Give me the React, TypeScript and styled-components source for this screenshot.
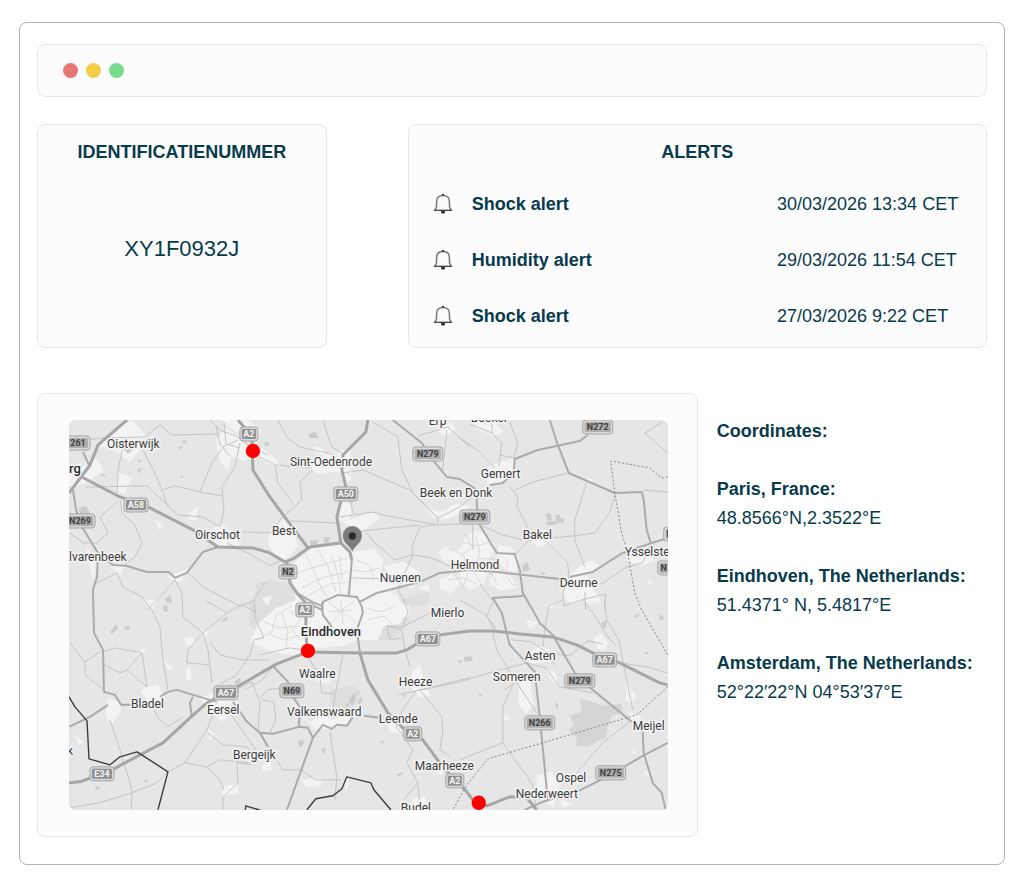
import React from "react";
import styled, { createGlobalStyle } from "styled-components";

const GlobalStyle = createGlobalStyle`
  *, *::before, *::after { box-sizing: border-box; }
  body {
    margin: 0;
    background: #ffffff;
    color: #073b4c;
    font-family: "Liberation Sans", Arial, Helvetica, sans-serif;
    font-size: 18px;
    line-height: 29px;
  }
`;

const Frame = styled.main`
  margin: 22px 19px 17px;
  padding: 21px 17px 27px;
  border: 1px solid #b4b4b4;
  border-radius: 8px;
`;

const Panel = styled.section`
  background: #fcfcfc;
  border: 1px solid #e6e6e6;
  border-radius: 8px;
`;

const TitleBar = styled.header`
  display: flex;
  align-items: center;
  gap: 8px;
  height: 53px;
  padding: 0 25px;
  background: #fcfcfc;
  border: 1px solid #e6e6e6;
  border-radius: 8px;
`;

const WindowDot = styled.span<{ $color: string }>`
  width: 15px;
  height: 15px;
  border-radius: 50%;
  background: ${(p) => p.$color};
`;

const SummaryRow = styled.div`
  display: grid;
  grid-template-columns: minmax(0, 1fr) minmax(0, 2fr);
  gap: 81px;
  margin-top: 27px;
`;

const IdPanel = styled(Panel)`
  display: flex;
  flex-direction: column;
  padding: 13px 16px;
  text-align: center;
`;

const PanelTitle = styled.h2`
  margin: 0;
  font-size: 18px;
  line-height: 29px;
  font-weight: 700;
  text-align: center;
`;

const IdNumber = styled.p`
  margin: 67px 0 0;
  font-size: 22px;
  line-height: 29px;
`;

const AlertsPanel = styled(Panel)`
  padding: 13px 24px 3px;
`;

const AlertList = styled.ul`
  list-style: none;
  margin: 9px 0 0;
  padding: 0;
`;

const AlertRow = styled.li`
  display: grid;
  grid-template-columns: 20px minmax(0, 1fr) 185px;
  column-gap: 19px;
  align-items: center;
  height: 56px;
`;

const AlertName = styled.strong`
  font-weight: 700;
`;

const AlertTime = styled.time`
  white-space: nowrap;
`;

const LocationRow = styled.div`
  display: grid;
  grid-template-columns: minmax(0, 660fr) minmax(0, 270fr);
  gap: 19px;
  margin-top: 45px;
`;

const MapPanel = styled(Panel)`
  padding: 26px 29px 26px 31px;
`;

const MapCanvas = styled.svg`
  display: block;
  width: 100%;
  height: auto;
  border-radius: 6px;
  overflow: hidden;
  background: #e6e6e6;
  font-family: Roboto, sans-serif;
`;

const Coordinates = styled.aside`
  padding-top: 24px;
  white-space: nowrap;
`;

const CoordinatesTitle = styled.h2`
  margin: 0;
  font-size: 18px;
  line-height: 29px;
`;

const Place = styled.dl`
  margin: 29px 0 0;

  dt { font-weight: 700; }
  dd { margin: 0; }
`;

const PlaceLabel = styled.text<{ $city?: boolean }>`
  font-size: ${(p) => (p.$city ? "13px" : "12px")};
  font-weight: ${(p) => (p.$city ? 500 : 400)};
  fill: ${(p) => (p.$city ? "#2a2a2a" : "#3c3c3c")};
  stroke: #f4f4f4;
  stroke-width: 3px;
  stroke-linejoin: round;
  paint-order: stroke;
`;

const ShieldLabel = styled.text<{ $motorway: boolean }>`
  font-size: 9px;
  font-weight: 700;
  text-anchor: middle;
  fill: ${(p) => (p.$motorway ? "#f4f4f4" : "#3f3f3f")};
`;

const Bell = () => (
  <svg width="20" height="22" viewBox="0 0 20 22" fill="none" aria-hidden="true">
    <path
      d="M1.500 16.900C2.900 16.200 3.600 14.600 3.600 12V8.400C3.600 4.500 6 2.500 10 2.500s6.400 2 6.400 5.900V12c0 2.600.7 4.200 2.100 4.900"
      stroke="#777777"
      strokeWidth="1.500"
      strokeLinejoin="round"
    />
    <path d="M1 17.300h18" stroke="#4c4c4c" strokeWidth="1.400" />
    <circle cx="10" cy="1.900" r="1.200" fill="#3e3e3e" />
    <path d="M7.900 18h4.200c0 1.700-.8 2.700-2.100 2.700s-2.100-1-2.100-2.700Z" fill="#333333" />
  </svg>
);

const towns = [
  "290,566 312,548 332,546 341,545 356,552 374,548 384,560 378,580 388,590 398,596 406,612 400,624 384,626 378,640 360,640 344,646 318,648 300,656 272,652 250,642 258,624 276,608 296,600",
  "438,552 446,546 452,552 462,548 466,536 476,530 486,534 496,546 492,558 478,564 462,562 446,564",
  "498,544 512,548 520,558 516,572 506,570 498,560",
  "458,566 474,564 488,572 484,584 470,590 462,582",
  "492,574 506,572 514,580 516,588 500,590 490,584",
  "440,580 452,574 460,584 450,594 440,588",
  "418,588 428,584 430,592",
  "100,446 114,428 132,420 146,436 140,450 130,462 116,452",
  "69,466 78,470 96,458 104,470 84,484 69,486",
  "216,440 226,428 238,436 250,450 246,462 232,456 228,470 220,462",
  "222,420 248,420 262,430 256,440 236,432",
  "262,448 275,458 282,468 268,464 258,456",
  "306,466 330,452 346,456 352,474 334,472 318,474",
  "314,446 322,448 326,456 314,452",
  "338,452 350,448 352,462 342,470 352,478 344,486",
  "270,530 284,518 290,522 298,546 286,560 274,554 268,544",
  "340,500 352,505 350,520 372,512 380,518 362,532 350,526 340,520",
  "203,534 222,524 236,534 240,546 222,548",
  "117,472 132,478 124,494 116,490",
  "190,512 198,506 196,520 188,520",
  "156,520 164,526 158,530",
  "86,548 96,556 94,582 88,560",
  "112,566 126,564 120,576",
  "168,576 186,570 182,582 172,580",
  "384,566 404,562 420,572 414,588 394,584",
  "372,580 386,574 398,580 396,590 380,592",
  "486,468 502,462 514,458 512,474 500,484 488,484",
  "470,420 492,420 504,432 494,436 478,430",
  "436,428 452,422 456,430 444,436",
  "426,508 440,512 456,504 470,506 460,514 444,520 434,518",
  "530,540 544,530 550,542 538,548",
  "562,582 580,566 592,560 600,566 588,576 594,590 602,602 590,604 578,600 572,606 564,596",
  "588,478 594,480 588,484",
  "626,560 650,548 654,562 640,566",
  "526,656 540,646 550,650 548,662 530,664",
  "546,670 556,672 558,684 550,680",
  "520,682 530,680 534,706 526,714 518,704",
  "526,620 538,622 530,630",
  "536,776 552,772 560,786 554,808 540,798",
  "560,800 574,804 564,808",
  "628,712 640,716 646,728 636,730",
  "594,638 602,634 608,642 604,652 598,648",
  "627,684 637,696 632,704 626,700",
  "412,672 420,664 424,680 430,696 420,698 412,688",
  "382,596 398,602 410,606 408,618 398,616",
  "386,720 402,724 402,734 390,732",
  "320,668 334,672 330,684 316,682",
  "296,712 310,722 320,716 334,720 352,712 348,726 334,728 316,730 308,722",
  "108,698 118,702 122,710 112,724 105,716",
  "140,690 158,684 164,698 156,706 148,704",
  "200,698 220,690 236,698 240,708 222,722 206,708",
  "186,672 190,664 192,678 186,682",
  "163,660 174,668 168,670",
  "136,654 146,646 144,654",
  "184,638 192,636 196,644 186,646",
  "200,630 210,632 204,638",
  "224,786 238,784 238,794 222,796",
  "208,730 216,734 210,740",
  "243,750 254,756 248,764",
  "262,766 270,762 272,770 262,772",
  "430,770 446,762 442,776",
  "412,800 426,796 426,810 414,810",
  "345,782 352,770 346,794",
  "506,714 510,720 504,720",
  "302,780 320,778 322,786 306,788",
  "646,770 650,776 644,774",
  "634,748 638,754 632,754",
  "648,578 653,582 649,586",
  "546,606 556,602 552,608",
  "262,598 272,596 268,606",
  "142,600 158,600 152,610",
  "76,736 84,742 78,746",
];

const woods = [
  "122,447 130,440 136,446 128,454",
  "182,440 188,441 184,444",
  "178,447 182,446 181,450",
  "137,470 142,468 139,474",
  "138,459 142,461 138,463",
  "102,474 107,475 101,477",
  "181,475 184,477 181,478",
  "78,508 86,506 92,516 80,514",
  "264,442 270,443 266,447",
  "308,434 316,432 318,438 310,438",
  "546,514 551,513 552,520 548,521",
  "556,515 560,515 561,519 565,518 563,524 560,522 556,524",
  "547,522 556,521 555,525 548,525",
  "523,565 528,562 530,570 523,572",
  "541,572 547,573 542,575",
  "262,584 266,581 264,586",
  "165,598 171,596 172,603 166,602",
  "163,606 167,605 168,611 164,612",
  "222,620 228,616 227,620 223,622",
  "110,632 116,624 118,628 112,634",
  "124,628 129,625 130,629 125,630",
  "234,682 240,678 241,682 236,685",
  "464,657 472,656 473,661 465,662",
  "458,661 463,660 460,664",
  "602,622 607,620 606,628 602,628",
  "634,616 640,613 638,618",
  "660,614 665,618 660,621",
  "644,652 650,652 647,655",
  "298,742 303,740 304,744 300,748",
  "321,750 326,748 324,755",
  "396,774 403,773 400,777",
  "95,786 101,788 96,790",
  "144,781 148,780 146,784",
  "350,700 354,692 356,700 352,706",
  "358,702 361,697 362,702 359,705",
  "402,696 406,694 405,698",
  "478,693 483,695 480,697",
  "556,702 559,706 556,710",
  "380,742 384,741 383,744",
  "262,668 266,670 263,672",
  "310,541 318,540 317,545 311,546",
  "324,538 330,537 329,542 324,543",
];

const streets = [
  "304,552 312,566 322,590 328,598",
  "318,550 328,566 336,592",
  "332,556 338,574 341,594",
  "296,574 312,568 340,560 348,558",
  "302,588 322,578 348,572",
  "308,596 330,584 350,582",
  "357,560 370,566 374,580",
  "352,570 366,572 380,568",
  "340,556 342,580",
  "330,612 352,610",
  "341,600 343,624",
  "328,602 340,611 354,602",
  "330,624 342,611 356,622",
  "264,622 280,628 300,626",
  "268,634 284,640 304,634",
  "282,612 288,632 286,648",
  "256,640 272,632 276,616 292,606",
  "290,610 300,620 292,630 300,640",
  "366,608 380,612 396,606",
  "368,620 384,616 392,624",
  "446,560 462,566 484,558 500,560",
  "452,548 464,556 468,574 462,590",
  "476,536 480,552 474,572 486,592",
  "492,552 490,570 498,586",
  "448,580 462,578 478,584",
  "508,560 506,576 514,586",
  "460,542 478,546 490,542",
  "466,534 472,548 460,556",
];

const lanes = [
  "69,447 84,440 104,438 145,437 160,425 172,435 217,434",
  "143,450 157,477 168,507",
  "123,447 118,470 117,493",
  "85,487 147,486 160,498 178,515 203,517 220,527",
  "163,490 175,486 200,492 222,496",
  "200,492 212,463 223,447 238,440",
  "240,443 235,467 222,487 224,510 220,527",
  "210,420 220,430 236,436 250,446 268,455",
  "224,422 226,444 240,448",
  "216,426 220,444 230,456",
  "120,500 122,513 135,525 142,543 135,557 123,566",
  "117,502 100,517 108,533 97,543 83,543 70,533",
  "242,532 270,533 284,526",
  "227,543 250,554 270,566 282,560",
  "188,573 203,587 222,597 240,606 252,602 262,588",
  "175,580 160,597 147,610",
  "175,580 182,593 183,617 203,633 208,650 212,683",
  "97,583 117,573 123,587 142,597 152,610 160,627 163,660 168,690",
  "203,633 227,613 242,605 257,613",
  "227,613 206,601",
  "203,633 188,650 187,663 210,665",
  "210,642 220,655 242,660 270,660",
  "254,600 256,620 264,638 254,640 250,655 236,676 220,684",
  "103,652 115,648 142,653 127,670 120,673 104,665",
  "127,670 147,687 142,653",
  "70,643 85,662 85,675 104,690",
  "85,662 100,652",
  "110,720 120,750 132,790 131,810",
  "69,808 100,803 132,793 157,783 168,772 185,763 207,730 214,712",
  "185,763 207,767 220,760 250,763",
  "207,767 220,780 224,790",
  "208,733 223,745 247,747 255,758",
  "153,707 158,718 168,727 183,717",
  "228,710 246,736 256,750",
  "236,690 252,682 260,703 258,732",
  "245,690 262,680 272,668",
  "252,765 237,763 238,783 223,797 223,810",
  "323,420 332,447 342,453",
  "278,420 287,437 300,447 336,455",
  "260,457 275,465 312,468",
  "313,470 300,482 302,500 283,517 270,533",
  "275,465 278,483 293,503",
  "343,473 363,470 410,490 438,518",
  "373,422 398,437 402,470 413,493 438,518 460,507 476,494",
  "438,518 438,525 410,520 383,515 374,512 340,517",
  "350,497 353,513",
  "290,521 337,523",
  "353,532 420,525",
  "435,525 420,527 412,547 413,555 398,590 404,600",
  "367,533 375,543 395,560 413,555",
  "438,525 462,524",
  "448,427 418,436",
  "448,427 470,447",
  "447,430 443,470",
  "353,578 383,579",
  "413,555 432,558 450,566",
  "460,438 480,452 495,468",
  "470,424 492,433 502,443 499,466",
  "492,420 492,433",
  "510,422 518,443 514,458 500,455",
  "510,487 518,497 517,507 527,525 526,537",
  "515,490 533,482 569,473",
  "587,482 575,520 575,540 585,567",
  "615,495 610,513 595,533 573,536 553,538",
  "515,554 530,540 545,540 568,563 569,577",
  "480,525 503,535 523,540",
  "473,524 473,550",
  "645,433 663,422",
  "645,433 668,453",
  "643,490 668,492",
  "569,577 563,593 564,606 582,600 606,594 605,610",
  "585,592 586,610",
  "600,585 627,567 643,563 651,545",
  "480,584 494,602",
  "493,602 487,616 495,630",
  "493,633 497,650 513,677 537,713",
  "460,600 486,615 496,628",
  "397,695 460,682 493,672 527,663 546,668 560,687 593,693",
  "505,690 520,680 532,674",
  "513,685 503,707 503,743 515,760 528,777 535,790 536,808",
  "460,760 477,753 503,743",
  "605,600 607,620 619,640 627,680 633,710",
  "583,600 594,614 606,634 616,646",
  "563,600 549,606 545,630 543,647",
  "512,640 532,642 546,652 556,666",
  "546,652 570,656 588,641 603,644",
  "630,722 603,743 577,773",
  "620,663 647,667 668,673",
  "387,626 402,630 405,650 410,667",
  "404,600 408,612 403,627 387,626",
  "387,626 390,640 402,638",
  "432,612 403,627",
  "420,690 442,717 443,733 440,750 450,756",
  "420,690 470,678",
  "417,690 403,710 396,726 413,750 407,763 418,783 420,806",
  "418,783 404,800",
  "343,655 332,713",
  "307,655 320,677 322,693 334,694",
  "260,655 290,648 304,650",
  "262,700 274,702 276,720 270,733",
  "330,732 337,777 335,800",
  "260,733 283,770 302,770 315,780 342,780",
  "282,688 268,690 260,698",
  "352,700 344,710 360,690",
];

const regionalRoads = [
  "83,452 90,467",
  "73,490 76,510 82,527 98,553 97,577 93,590 94,633 103,650 104,692 115,695 121,705 132,705",
  "98,553 113,565 127,566 147,572 169,572 175,578 187,573 203,552 218,547",
  "69,727 90,717 108,705",
  "160,697 168,692 177,690 193,695 217,702",
  "193,697 190,703 192,717",
  "233,702 247,722 260,733 273,734 299,727 308,728 313,738 287,810",
  "260,733 268,747",
  "272,665 288,682 293,697 300,707 299,727",
  "313,738 323,725 332,729 337,725 347,726 353,717",
  "364,716 380,718",
  "306,603 314,606 322,610 323,602 338,595 357,597 362,607 363,613 357,630 360,652",
  "322,603 323,615 332,627",
  "297,593 312,602 322,606",
  "360,602 377,593 420,582 440,573 470,570 497,572 560,579",
  "393,420 422,443 433,460 447,477 460,479 477,490 477,507 480,525 497,553 515,554 520,570 523,593 533,610 540,623 553,635 575,673 593,690 632,722",
  "523,596 493,598 502,613 510,645 535,672 540,717 548,800",
  "588,435 580,441 538,450 515,459 514,472 503,483 490,485",
  "550,420 558,445 569,473 615,493 642,492 644,500 647,530 651,543",
  "570,577 593,572 623,553 652,543 668,538",
  "525,810 543,802 577,792 607,777 645,755 668,743",
  "643,732 644,753 653,783 662,793 666,810",
  "352,560 349,595",
];

const motorways = [
  "238,420 252,436 253,470 270,497 287,520 308,548",
  "127,420 98,445 90,465 69,493",
  "76,474 120,497 150,508 193,530 218,547 253,548 270,553 285,562 293,559 310,547 340,543",
  "368,420 366,432 343,455 342,470 346,487 340,505 337,517 341,543 350,552 352,560",
  "287,562 290,583 297,593 306,603 306,625 307,650",
  "69,783 80,782 112,770 140,755 163,743 190,718 207,703 237,687 277,664 308,652 360,653 397,653 407,650 420,642 440,635 470,631 493,631 520,634 553,637 577,645 597,655 620,663 660,683 668,685",
  "360,653 368,680 388,713 403,728 423,740 440,763 453,778 467,792 473,800 487,806 510,797 527,798 537,810",
];

const border = [
  "69,697 75,707 87,721 89,759 110,765 120,757 137,752 168,772 158,810",
  "245,812 246,806 262,811",
  "307,810 316,799 333,796 342,789 347,777 371,783 374,790 391,810",
];

const boundaries = [
  "668,477 662,478 650,468 611,461 615,493 622,533 628,553 635,593 642,610 668,655",
  "668,687 637,715 543,743 488,759 467,785 453,810",
];

type Label = { x: number; y: number; name: string; city?: boolean };

const places: Label[] = [
  { x: 107, y: 448, name: "Oisterwijk" },
  { x: 69, y: 473, name: "rg", city: true },
  { x: 195, y: 539, name: "Oirschot" },
  { x: 69, y: 561, name: "lvarenbeek" },
  { x: 290, y: 466, name: "Sint-Oedenrode" },
  { x: 429, y: 425, name: "Erp" },
  { x: 471, y: 422, name: "Boekel" },
  { x: 481, y: 478, name: "Gemert" },
  { x: 420, y: 497, name: "Beek en Donk" },
  { x: 272, y: 535, name: "Best" },
  { x: 523, y: 539, name: "Bakel" },
  { x: 451, y: 569, name: "Helmond" },
  { x: 380, y: 582, name: "Nuenen" },
  { x: 625, y: 556, name: "Ysselste" },
  { x: 560, y: 587, name: "Deurne" },
  { x: 431, y: 617, name: "Mierlo" },
  { x: 301, y: 636, name: "Eindhoven", city: true },
  { x: 525, y: 660, name: "Asten" },
  { x: 493, y: 681, name: "Someren" },
  { x: 299, y: 678, name: "Waalre" },
  { x: 399, y: 686, name: "Heeze" },
  { x: 131, y: 708, name: "Bladel" },
  { x: 207, y: 714, name: "Eersel" },
  { x: 287, y: 716, name: "Valkenswaard" },
  { x: 379, y: 723, name: "Leende" },
  { x: 633, y: 730, name: "Meijel" },
  { x: 233, y: 759, name: "Bergeijk" },
  { x: 415, y: 770, name: "Maarheeze" },
  { x: 556, y: 782, name: "Ospel" },
  { x: 516, y: 798, name: "Nederweert" },
  { x: 401, y: 812, name: "Budel" },
  { x: 67, y: 755, name: "k" },
];

type Route = { x: number; y: number; code: string };

const routes: Route[] = [
  { x: 78, y: 443, code: "261" },
  { x: 249, y: 434, code: "A2" },
  { x: 136, y: 505, code: "A58" },
  { x: 80, y: 521, code: "N269" },
  { x: 346, y: 494, code: "A50" },
  { x: 428, y: 454, code: "N279" },
  { x: 598, y: 427, code: "N272" },
  { x: 475, y: 517, code: "N279" },
  { x: 288, y: 572, code: "N2" },
  { x: 305, y: 610, code: "A2" },
  { x: 428, y: 639, code: "A67" },
  { x: 605, y: 660, code: "A67" },
  { x: 580, y: 681, code: "N279" },
  { x: 292, y: 691, code: "N69" },
  { x: 226, y: 693, code: "A67" },
  { x: 540, y: 723, code: "N266" },
  { x: 413, y: 734, code: "A2" },
  { x: 455, y: 781, code: "A2" },
  { x: 611, y: 773, code: "N275" },
  { x: 102, y: 774, code: "E34" },
  { x: 670, y: 534, code: "N" },
  { x: 664, y: 568, code: "N" },
];

const trackerStops = [
  { x: 253, y: 451 },
  { x: 308, y: 651 },
  { x: 479, y: 803 },
];

type LinesProps = { paths: string[]; color: string; width: number; dash?: string };

const Lines = ({ paths, color, width, dash }: LinesProps) => (
  <g fill="none" stroke={color} strokeWidth={width} strokeDasharray={dash} strokeLinejoin="round">
    {paths.map((points) => (
      <polyline key={points} points={points} />
    ))}
  </g>
);

const Areas = ({ shapes, color }: { shapes: string[]; color: string }) => (
  <g fill={color}>
    {shapes.map((points) => (
      <polygon key={points} points={points} />
    ))}
  </g>
);

const Shield = ({ x, y, code }: Route) => {
  const motorway = /^[AE]/.test(code);
  const width = 6 + code.length * 6;
  return (
    <g>
      <rect x={x - width / 2} y={y - 7} width={width} height={14} rx={3} fill="#dadada" stroke="#a3a3a3" />
      <rect x={x - width / 2 + 2} y={y - 5} width={width - 4} height={10} rx={1} fill={motorway ? "#8f8f8f" : "#adadad"} />
      <ShieldLabel x={x} y={y + 3} $motorway={motorway}>
        {code}
      </ShieldLabel>
    </g>
  );
};

const moorland = [
  "250,600 290,586 300,600 280,612 262,634 250,626",
  "256,584 270,580 288,584 284,600 266,612 254,604",
  "352,600 400,598 412,622 392,640 362,640",
  "400,600 430,590 428,604 408,608",
  "330,690 356,686 362,700 348,712 330,704",
];

const peat = [
  "580,699 592,702 604,706 622,704 623,712 612,716 608,728 606,738 596,742 588,747 576,746 577,738 569,731 574,724 570,716 582,712",
];

const RegionMap = () => (
  <MapCanvas viewBox="69 420 599 390" role="img" aria-label="Map of the Eindhoven region">
    <Areas shapes={moorland} color="#dedede" />
    <Areas shapes={peat} color="#d5d5d5" />
    <Areas shapes={towns} color="#f3f3f3" />
    <Areas shapes={woods} color="#cbcbcb" />
    <Lines paths={streets} color="#dadada" width={1} />
    <Lines paths={lanes} color="#c4c4c4" width={1} />
    <Lines paths={regionalRoads} color="#ababab" width={2} />
    <Lines paths={motorways} color="#a6a6a6" width={3} />
    <Lines paths={boundaries} color="#858585" width={1} dash="2 2" />
    <Lines paths={border} color="#3d3d3d" width={1.4} />
    {routes.map((route) => (
      <Shield key={`${route.x}-${route.y}`} {...route} />
    ))}
    {places.map((place) => (
      <PlaceLabel key={place.name} x={place.x} y={place.y} $city={place.city}>
        {place.name}
      </PlaceLabel>
    ))}
    <path d="M352.500 552c-1-5.500-9.500-8-9.500-16.500a9.500 9.500 0 0 1 19 0c0 8.500-8.500 11-9.500 16.500Z" fill="#7b7b7b" />
    <circle cx="352.500" cy="536" r="3.700" fill="#2b2b2b" />
    {trackerStops.map((stop) => (
      <circle key={stop.x} cx={stop.x} cy={stop.y} r="7.200" fill="#ff0000" />
    ))}
  </MapCanvas>
);

const alerts = [
  { name: "Shock alert", time: "30/03/2026 13:34 CET" },
  { name: "Humidity alert", time: "29/03/2026 11:54 CET" },
  { name: "Shock alert", time: "27/03/2026 9:22 CET" },
];

const coordinates = [
  { place: "Paris, France:", value: "48.8566°N,2.3522°E" },
  { place: "Eindhoven, The Netherlands:", value: "51.4371° N, 5.4817°E" },
  { place: "Amsterdam, The Netherlands:", value: "52°22′22°N 04°53′37°E" },
];

export default function App() {
  return (
    <>
      <GlobalStyle />
      <Frame>
        <TitleBar>
          <WindowDot $color="#e57872" />
          <WindowDot $color="#f3cc48" />
          <WindowDot $color="#78dc8c" />
        </TitleBar>
        <SummaryRow>
          <IdPanel>
            <PanelTitle>IDENTIFICATIENUMMER</PanelTitle>
            <IdNumber>XY1F0932J</IdNumber>
          </IdPanel>
          <AlertsPanel>
            <PanelTitle>ALERTS</PanelTitle>
            <AlertList>
              {alerts.map((alert) => (
                <AlertRow key={alert.time}>
                  <Bell />
                  <AlertName>{alert.name}</AlertName>
                  <AlertTime>{alert.time}</AlertTime>
                </AlertRow>
              ))}
            </AlertList>
          </AlertsPanel>
        </SummaryRow>
        <LocationRow>
          <MapPanel>
            <RegionMap />
          </MapPanel>
          <Coordinates>
            <CoordinatesTitle>Coordinates:</CoordinatesTitle>
            {coordinates.map((item) => (
              <Place key={item.place}>
                <dt>{item.place}</dt>
                <dd>{item.value}</dd>
              </Place>
            ))}
          </Coordinates>
        </LocationRow>
      </Frame>
    </>
  );
}
